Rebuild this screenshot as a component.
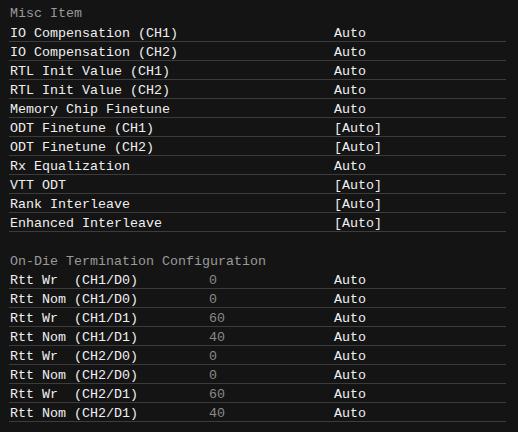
export default function App() {
  const misc = [
    ["IO Compensation (CH1)", "Auto"],
    ["IO Compensation (CH2)", "Auto"],
    ["RTL Init Value (CH1)", "Auto"],
    ["RTL Init Value (CH2)", "Auto"],
    ["Memory Chip Finetune", "Auto"],
    ["ODT Finetune (CH1)", "[Auto]"],
    ["ODT Finetune (CH2)", "[Auto]"],
    ["Rx Equalization", "Auto"],
    ["VTT ODT", "[Auto]"],
    ["Rank Interleave", "[Auto]"],
    ["Enhanced Interleave", "[Auto]"],
  ];
  const odt = [
    ["Rtt Wr  (CH1/D0)", "0"],
    ["Rtt Nom (CH1/D0)", "0"],
    ["Rtt Wr  (CH1/D1)", "60"],
    ["Rtt Nom (CH1/D1)", "40"],
    ["Rtt Wr  (CH2/D0)", "0"],
    ["Rtt Nom (CH2/D0)", "0"],
    ["Rtt Wr  (CH2/D1)", "60"],
    ["Rtt Nom (CH2/D1)", "40"],
  ];
  const row = "flex h-[19px] box-border border-b border-[#3c3c3c] pt-[4px] leading-[14px]";
  return (
    <div
      className="w-[518px] h-[432px] bg-[#141414] pt-[4px] pl-[9px] overflow-hidden text-[13.33px] whitespace-pre"
      style={{ fontFamily: '"Liberation Mono", monospace' }}
    >
      <div className="w-[497px]">
        <div className="h-[19px] pt-[3px] leading-[14px] pl-[1px] text-[#9a9a9a]">Misc Item</div>
        {misc.map(([l, v]) => (
          <div key={l} className={row}>
            <div className="w-[325px] pl-[1px] text-[#f0f0f0]">{l}</div>
            <div className="text-[#f0f0f0]">{v}</div>
          </div>
        ))}
        <div className="h-[19px]" />
        <div className="h-[19px] pt-[4px] leading-[14px] pl-[1px] text-[#9a9a9a]">On-Die Termination Configuration</div>
        {odt.map(([l, n], i) => (
          <div key={i} className={row}>
            <div className="w-[200px] pl-[1px] text-[#f0f0f0]">{l}</div>
            <div className="w-[125px] text-[#8a8a8a]">{n}</div>
            <div className="text-[#f0f0f0]">Auto</div>
          </div>
        ))}
      </div>
    </div>
  );
}
